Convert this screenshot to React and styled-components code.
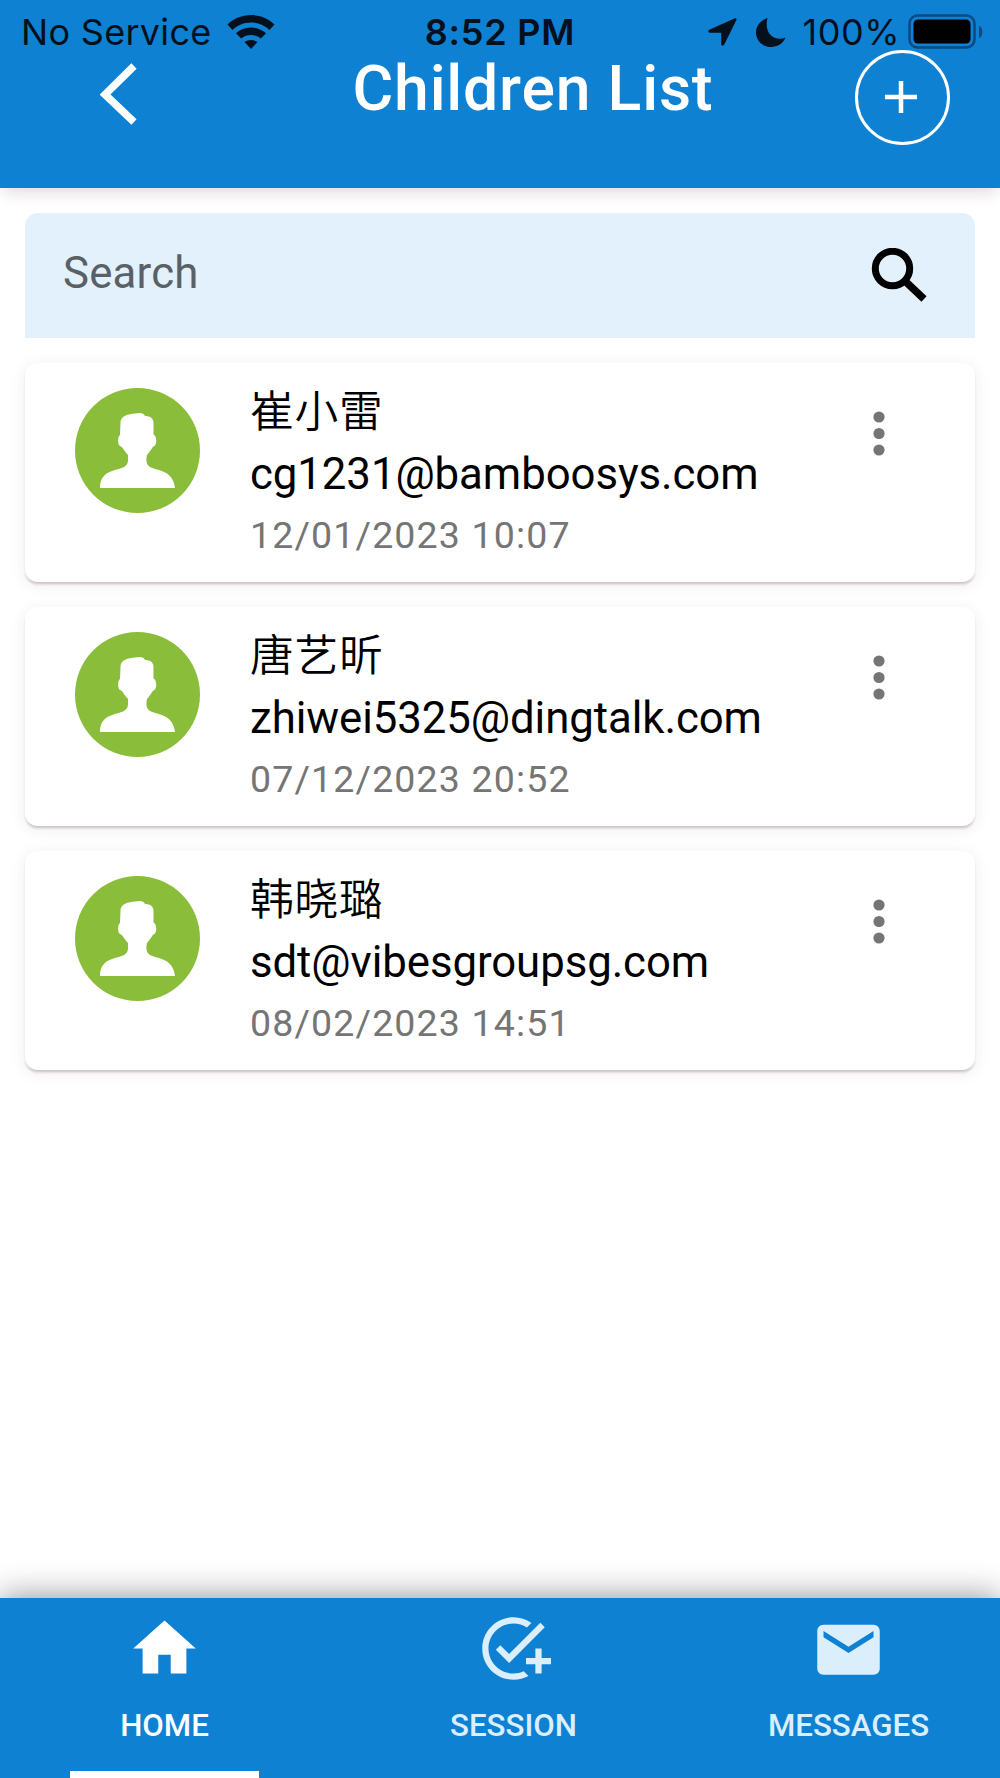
import styled, { createGlobalStyle } from "styled-components";

const GlobalStyles = createGlobalStyle`
	*,
	*::before,
	*::after {
		box-sizing: border-box;
	}

	body {
		margin: 0;
		background-color: #fff;
		font-family: Roboto, "Noto Sans CJK SC", sans-serif;
	}

	button,
	input {
		font-family: inherit;
		border: none;
		background: none;
		padding: 0;
	}
`;

const Screen = styled.div`
	display: flex;
	flex-direction: column;
	width: 1000px;
	height: 1778px;
	overflow: hidden;
	background-color: #fff;
`;

const Header = styled.header`
	flex: none;
	height: 188px;
	background-color: #0f81d3;
	box-shadow: 0 6px 16px -3px rgba(60, 20, 30, 0.18);
`;

const StatusBar = styled.div`
	display: grid;
	grid-template-columns: 1fr auto 1fr;
	align-items: center;
	height: 50px;
	padding: 14px 17px 0 21px;
	font-family: Inter, sans-serif;
	font-size: 36px;
	line-height: 36px;
	color: #04101c;
`;

const StatusGroup = styled.div`
	display: flex;
	align-items: center;
	justify-content: ${(props) => props.$align || "flex-start"};
	white-space: nowrap;
`;

const Carrier = styled.span`
	width: 190px;
	margin-right: 16px;
	letter-spacing: 0.3px;
`;

const Clock = styled.span`
	margin-right: 4px;
	font-weight: 600;
	letter-spacing: 0.8px;
`;

const Percent = styled.span`
	margin: 0 8px 0 17px;
	letter-spacing: 0.5px;
`;

const Moon = styled.svg`
	margin-left: 19px;
`;

const Toolbar = styled.div`
	display: grid;
	grid-template-columns: 236px 1fr 236px;
	height: 138px;
`;

const BackButton = styled.button`
	display: flex;
	align-items: flex-start;
	padding: 13px 0 0 100px;
`;

const Title = styled.h1`
	margin: 0;
	padding: 1px 0 0 66px;
	text-align: center;
	font-size: 62.5px;
	line-height: 75px;
	font-weight: 500;
	letter-spacing: 0.8px;
	white-space: nowrap;
	color: #fff;
`;

const AddButton = styled.button`
	display: flex;
	align-items: center;
	justify-content: center;
	justify-self: end;
	width: 95px;
	height: 95px;
	margin-right: 50px;
	padding: 0 3px 1px 0;
	border: 3px solid #fff;
	border-radius: 50%;
`;

const Content = styled.main`
	flex: 1;
	display: flex;
	flex-direction: column;
	gap: 25px;
	padding: 25px;
`;

const SearchBar = styled.label`
	display: flex;
	align-items: center;
	height: 125px;
	padding: 0 48px 0 38px;
	border-radius: 12.5px 12.5px 0 0;
	background-color: #e3f1fd;
`;

const SearchInput = styled.input`
	flex: 1;
	height: 60px;
	margin-top: -5px;
	font-size: 43.75px;
	letter-spacing: 0.2px;
	outline: none;

	&::placeholder {
		color: #596066;
	}
`;

const Card = styled.article`
	display: flex;
	height: 219px;
	padding: 25px 50px;
	border-radius: 12.5px;
	background-color: #fff;
	box-shadow: 0 3px 3px -1px rgba(50, 30, 35, 0.24),
		0 3px 16px 1px rgba(90, 30, 45, 0.07);
`;

const Details = styled.div`
	flex: 1;
	margin-left: 50px;
	padding-top: 2px;
	white-space: nowrap;
`;

const Name = styled.div`
	height: 53px;
	font-size: 43.75px;
	font-weight: 350;
	line-height: 45px;
	letter-spacing: 0.8px;
	color: #000;
`;

const Email = styled.div`
	height: 61px;
	font-size: 43.75px;
	line-height: 62px;
	letter-spacing: -0.07px;
	color: #000;
`;

const CreatedAt = styled.div`
	font-size: 37.5px;
	line-height: 62px;
	letter-spacing: 1.15px;
	color: #757575;
`;

const MenuButton = styled.button`
	align-self: flex-start;
	height: 46px;
	margin: 23px 40px 0 0;
`;

const TabBar = styled.nav`
	flex: none;
	display: flex;
	height: 180px;
	padding-left: 70px;
	background-color: #0f81d3;
	box-shadow: 0 0 32px rgba(0, 0, 0, 0.46);
`;

const Tab = styled.button`
	display: flex;
	flex-direction: column;
	align-items: center;
	width: 189px;
	height: 180px;
	margin-right: ${(props) => props.$gap || "0"};
	padding-top: 13px;
	font-size: 31.25px;
	line-height: 38px;
	font-weight: 500;
	color: ${(props) => (props.$active ? "#fff" : "#dbeefb")};
	border-bottom: 7px solid ${(props) => (props.$active ? "#fff" : "transparent")};

	svg {
		flex: none;
		margin-bottom: 21px;
	}
`;

const children = [
	{
		name: "崔小雷",
		email: "cg1231@bamboosys.com",
		createdAt: "12/01/2023 10:07",
	},
	{
		name: "唐艺昕",
		email: "zhiwei5325@dingtalk.com",
		createdAt: "07/12/2023 20:52",
	},
	{
		name: "韩晓璐",
		email: "sdt@vibesgroupsg.com",
		createdAt: "08/02/2023 14:51",
	},
];

function WifiIcon() {
	return (
		<svg width="48" height="34" viewBox="0 0 48 34" fill="#04101c">
			<path d="M24 0C15 0 6.500 3.500 .5 9.500L5.500 15C10.500 10.300 17 7.600 24 7.600S37.500 10.300 42.500 15L47.500 9.500C41.500 3.500 33 0 24 0Z" />
			<path d="M24 12.500C18 12.500 13 14.700 9 18.200L14.200 23.400C17 21.200 20.300 20 24 20S31 21.200 33.800 23.400L39 18.200C35 14.700 30 12.500 24 12.500Z" />
			<path d="M24 25C21.500 25 19.300 25.800 17.500 27L24 34L30.500 27C28.700 25.800 26.500 25 24 25Z" />
		</svg>
	);
}

function LocationIcon() {
	return (
		<svg width="29" height="28" viewBox="0 0 29 28" fill="#04101c">
			<path d="M26.500 .4 1.300 11.700C-.4 12.500 0 14.700 1.900 14.700H13.200V26C13.200 27.900 15.500 28.200 16.300 26.600L28.400 2C29 .8 27.800-.2 26.500 .4Z" />
		</svg>
	);
}

function BatteryIcon() {
	return (
		<svg width="75" height="36" viewBox="0 0 75 36">
			<rect x="1.500" y="1.500" width="65" height="32" rx="8" fill="none" stroke="#0a4a80" strokeWidth="2.500" />
			<rect x="5.500" y="5.500" width="57" height="24" rx="4.500" fill="#000" />
			<path d="M71 12C75.500 13 75.500 23 71 24Z" fill="#0a4a80" />
		</svg>
	);
}

function Avatar() {
	return (
		<svg width="125" height="125" viewBox="0 0 125 125">
			<circle cx="62.500" cy="62.500" r="62.500" fill="#8abd3a" />
			<path
				fill="#fff"
				d="M45.500 34C46 28 53 26 60 25.500C66 24 69 25.500 70 28C75 28 78 30 78.500 34V46.500C82 48 82 56 79.500 58C77.500 58 76.500 62 72 67C71 71 71 77 75 79C83 83 98 82 100 100H25C25 82 41 83 49 79C54 76 53 72 53 67C49 63 48 59 45 58C42.500 57 42.500 48 45 47Z"
			/>
		</svg>
	);
}

function HomeIcon() {
	return (
		<svg width="75" height="75" viewBox="0 0 24 24" fill="currentColor">
			<path d="M10 20v-6h4v6h5v-8h3L12 3 2 12h3v8z" />
		</svg>
	);
}

function SessionIcon() {
	return (
		<svg width="75" height="75" viewBox="0 0 24 24" fill="currentColor">
			<path d="M22 5.180 10.590 16.600l-4.240-4.240 1.410-1.410 2.830 2.830 10-10L22 5.180zM12 20c-4.410 0-8-3.590-8-8s3.590-8 8-8c1.570 0 3.040.46 4.280 1.250l1.450-1.450C16.100 2.670 14.130 2 12 2 6.480 2 2 6.480 2 12s4.480 10 10 10c1.730 0 3.360-.44 4.780-1.220l-1.500-1.500c-1 .46-2.110.72-3.280.72zm7-5h-3v2h3v3h2v-3h3v-2h-3v-3h-2v3z" />
		</svg>
	);
}

function MailIcon() {
	return (
		<svg width="75" height="75" viewBox="0 -0.4 24 24" fill="currentColor">
			<path d="M20 4H4c-1.100 0-1.990.9-1.990 2L2 18c0 1.100.9 2 2 2h16c1.100 0 2-.9 2-2V6c0-1.100-.9-2-2-2zm0 4-8 5-8-5V6l8 5 8-5v2z" />
		</svg>
	);
}

function ChildRow({ child }) {
	const { name, email, createdAt } = child;

	return (
		<Card>
			<Avatar />
			<Details>
				<Name>{name}</Name>
				<Email>{email}</Email>
				<CreatedAt>{createdAt}</CreatedAt>
			</Details>
			<MenuButton aria-label="More">
				<svg width="12" height="46" viewBox="0 0 12 46" fill="#757575">
					<circle cx="6" cy="6" r="5.600" />
					<circle cx="6" cy="22.500" r="5.600" />
					<circle cx="6" cy="39" r="5.600" />
				</svg>
			</MenuButton>
		</Card>
	);
}

function App() {
	return (
		<>
			<GlobalStyles />
			<Screen>
				<Header>
					<StatusBar>
						<StatusGroup>
							<Carrier>No Service</Carrier>
							<WifiIcon />
						</StatusGroup>
						<Clock>8:52 PM</Clock>
						<StatusGroup $align="flex-end">
							<LocationIcon />
							<Moon width="30" height="29" viewBox="0 0 30 29" fill="#04101c">
								<path d="M11.500 0C4.500 2.500 0 8 0 14.500C0 22.500 6.500 29 15 29C21.500 29 27 25.500 29.500 19.500C19 24 7.500 16 11.500 0Z" />
							</Moon>
							<Percent>100%</Percent>
							<BatteryIcon />
						</StatusGroup>
					</StatusBar>
					<Toolbar>
						<BackButton aria-label="Back">
							<svg width="37" height="62" viewBox="0 0 37 62">
								<path d="M34 3 5 31.500 34 59" fill="none" stroke="#fff" strokeWidth="7.500" />
							</svg>
						</BackButton>
						<Title>Children List</Title>
						<AddButton aria-label="Add child">
							<svg width="32" height="32" viewBox="0 0 32 32">
								<path d="M16 0V32M0 16H32" stroke="#fff" strokeWidth="4.500" />
							</svg>
						</AddButton>
					</Toolbar>
				</Header>

				<Content>
					<SearchBar>
						<SearchInput placeholder="Search" />
						<svg width="56" height="56" viewBox="0 0 56 56">
							<circle cx="21.500" cy="20.500" r="17.200" fill="none" stroke="#000" strokeWidth="7" />
							<path d="M34 33 53 51" stroke="#000" strokeWidth="7.500" />
						</svg>
					</SearchBar>
					{children.map((child) => (
						<ChildRow key={child.email} child={child} />
					))}
				</Content>

				<TabBar>
					<Tab $active $gap="160px">
						<HomeIcon />
						HOME
					</Tab>
					<Tab $gap="146px">
						<SessionIcon />
						SESSION
					</Tab>
					<Tab>
						<MailIcon />
						MESSAGES
					</Tab>
				</TabBar>
			</Screen>
		</>
	);
}

export default App;
